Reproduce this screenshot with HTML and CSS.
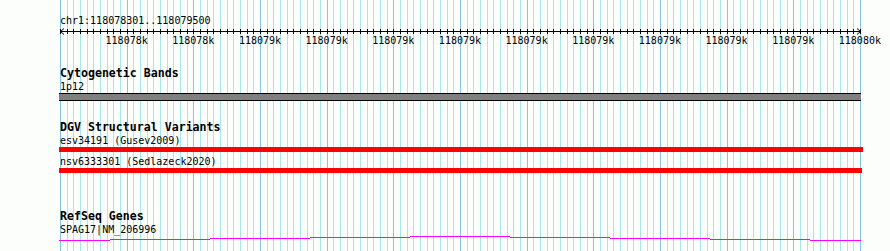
FILE: index.html
```html
<!DOCTYPE html>
<html lang="en">
<head>
    <meta charset="UTF-8">
    <meta name="viewport" content="width=device-width, initial-scale=1.0">
    <title>chr1:118078301..118079500</title>
    <link rel="stylesheet" href="styles.css">
</head>
<body>

    <div class="panel">

        <div class="ruler">
            <div class="small">chr1:118078301..118079500</div>
            <svg class="axis" width="803" height="7" viewBox="0 0 803 7">
                <defs>
                    <pattern id="tick" x="1" y="0" width="20" height="7" patternUnits="userSpaceOnUse">
                        <rect x="0" y="1" width="1" height="5" fill="#000"/>
                        <rect x="7" y="1" width="1" height="5" fill="#000"/>
                        <rect x="13" y="1" width="1" height="5" fill="#000"/>
                    </pattern>
                </defs>
                <rect x="1" y="0" width="801" height="7" fill="url(#tick)"/>
                <rect x="1" y="3" width="801" height="1" fill="#000"/>
                <path d="M5 0.5 L1.5 3.5 L5 6.5 M798 0.5 L801.5 3.5 L798 6.5" fill="none" stroke="#000" stroke-width="1"/>
            </svg>
            <div class="tick-labels small">
                <span>118078k</span>
                <span>118078k</span>
                <span>118079k</span>
                <span>118079k</span>
                <span>118079k</span>
                <span>118079k</span>
                <span>118079k</span>
                <span>118079k</span>
                <span>118079k</span>
                <span>118079k</span>
                <span>118079k</span>
                <span>118080k</span>
            </div>
        </div>

        <div class="track track-bands">
            <div class="track-title">Cytogenetic Bands</div>
            <div class="small">1p12</div>
            <div class="band"></div>
        </div>

        <div class="track track-dgv">
            <div class="track-title">DGV Structural Variants</div>
            <div class="feature">
                <div class="small">esv34191 (Gusev2009)</div>
                <div class="variant"></div>
            </div>
            <div class="feature">
                <div class="small">nsv6333301 (Sedlazeck2020)</div>
                <div class="variant short"></div>
            </div>
        </div>

        <div class="track track-genes">
            <div class="track-title">RefSeq Genes</div>
            <div class="small">SPAG17|NM_206996</div>
            <!-- coverage-ish step line, one step per 100px -->
            <svg class="gene-line" width="803" height="5" viewBox="0 0 803 5">
                <g fill="#ff00ff">
                    <rect x="0" y="4" width="51" height="1"/>
                    <rect x="51" y="3" width="100" height="1"/>
                    <rect x="151" y="2" width="100" height="1"/>
                    <rect x="251" y="1" width="100" height="1"/>
                    <rect x="351" y="0" width="100" height="1"/>
                    <rect x="451" y="1" width="100" height="1"/>
                    <rect x="551" y="2" width="100" height="1"/>
                    <rect x="651" y="3" width="100" height="1"/>
                    <rect x="751" y="4" width="51" height="1"/>
                </g>
            </svg>
        </div>

    </div>

</body>
</html>
```

FILE: styles.css
```css
body {
    margin: 0;
    background-color: #fcfefc;
}
.panel {
    width: 890px;
    height: 251px;
    box-sizing: border-box;
    padding: 14px 0 0 60px;
    overflow: hidden;
    background-color: #fcfefc;
    background-image:
        repeating-linear-gradient(to right, #84c4ea 0 1px, transparent 1px 67px, #84c4ea 67px 68px, transparent 68px 133px, #84c4ea 133px 134px, transparent 134px 200px),
        repeating-linear-gradient(to right, #a6e8e8 0 1px, transparent 1px 7px, #a6e8e8 7px 8px, transparent 8px 13px, #a6e8e8 13px 14px, transparent 14px 20px);
    background-size: 801px 100%;
    background-position: 60px 0;
    background-repeat: no-repeat;
    font-family: "DejaVu Sans Mono", "Liberation Mono", monospace;
    color: #000;
}
.small {
    font-size: 10px;
    line-height: 13px;
    height: 13px;
    white-space: nowrap;
}
.track-title {
    font-size: 11.6px;
    font-weight: bold;
    line-height: 13px;
    height: 13px;
    white-space: nowrap;
}
.axis {
    display: block;
    margin: 1px 0 0 -1px;
}
.tick-labels {
    display: grid;
    grid-template-columns: repeat(12, 66.667px);
    margin: -1px 0 0 33.333px;
}
.tick-labels span {
    text-align: center;
}
.track-bands {
    margin-top: 20px;
}
.track-dgv {
    margin-top: 20px;
}
.track-genes {
    margin-top: 37px;
}
.band {
    margin-left: -1px;
    width: 802px;
    height: 6px;
    background-color: #808080;
    border-top: 1px solid #000;
    border-bottom: 1px solid #000;
}
.feature + .feature {
    margin-top: 3px;
}
.variant {
    margin-left: -1px;
    width: 804px;
    height: 5px;
    background-color: #ff0000;
}
.variant.short {
    width: 803px;
}
.gene-line {
    display: block;
    margin-left: -1px;
}
```
